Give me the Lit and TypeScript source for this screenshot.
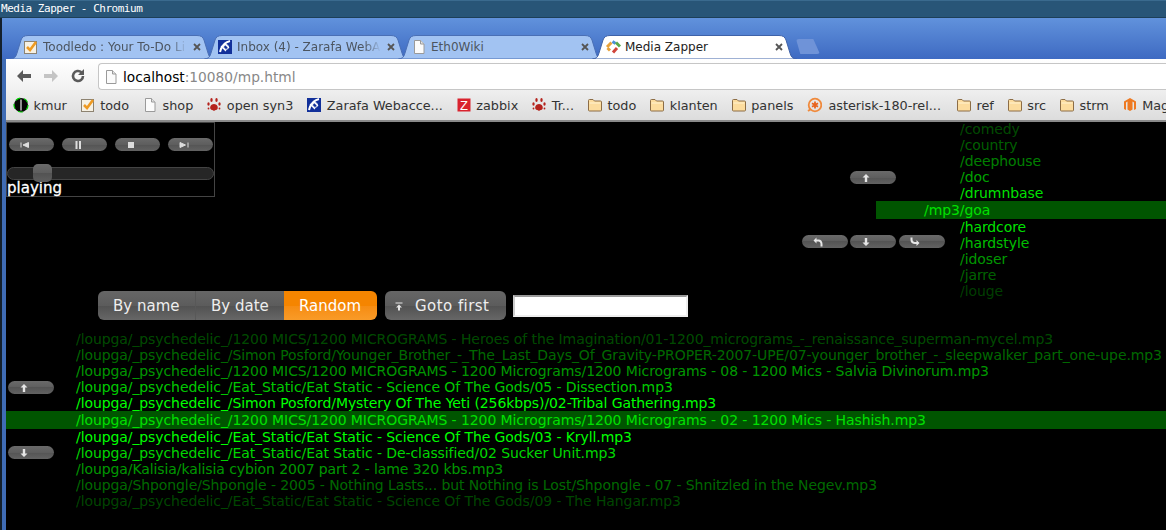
import { LitElement, html, css, svg } from "lit";
import { customElement } from "lit/decorators.js";

const page = svg`<path d="M3.500 1.500h6l3.500 3.500v9.500h-9.500z" fill="#fbfbfb" stroke="#9a9a9a"/><path d="M9.500 1.500v3.500h3.500" fill="#e4e4e4" stroke="#9a9a9a"/>`;
const check = svg`<rect x="1.500" y="2.500" width="12" height="12" fill="#f6f1e4" stroke="#8d8371"/><path d="M4 8l3 3 6-8" fill="none" stroke="#ee9a22" stroke-width="2.600"/>`;
const zarafa = svg`<rect x="1" y="1" width="14" height="14" fill="#12309a"/><path d="M3 13C4 8 8 3 13 2" fill="none" stroke="#fff" stroke-width="2"/><path d="M4 7l5 5M7 4l5 5" stroke="#fff" stroke-width="1.200"/><circle cx="9" cy="8" r="2.400" fill="none" stroke="#fff"/>`;
const paw = svg`<g fill="#b5221c"><path d="M8 7c3 0 4.500 3 3.500 5-1 1.500-2 .5-3.500 2-1.500-1.500-2.500-.5-3.500-2-1-2 .5-5 3.500-5z"/><ellipse cx="2.500" cy="7" rx="1.200" ry="1.800"/><ellipse cx="13.500" cy="7" rx="1.200" ry="1.800"/><ellipse cx="5.500" cy="3" rx="1.200" ry="2"/><ellipse cx="10.500" cy="3" rx="1.200" ry="2"/><circle cx="2.500" cy="11.500" r=".9"/><circle cx="13.500" cy="11.500" r=".9"/></g>`;
const folder = svg`<path d="M1.500 5V3.500q0-1 1-1h3.500l1.500 1.500h6q1 0 1 1v8q0 1-1 1h-11q-1 0-1-1z" fill="#fcdc9e" stroke="#8c6d46"/><path d="M2.500 6h11" stroke="#fff2d0"/>`;
const kmur = svg`<circle cx="8" cy="8" r="7" fill="#050505" stroke="#0c0" stroke-width="1.200" stroke-dasharray="5 4"/><path d="M8 2.500v11" stroke="#ccc" stroke-width="1.400"/>`;
const zabbix = svg`<rect x="1.500" y="1.500" width="13" height="13" fill="#d9232e"/><text x="8" y="13" font-size="13" text-anchor="middle" fill="#fff" font-family="Liberation Sans, sans-serif">Z</text>`;
const aster = svg`<circle cx="9" cy="8" r="6.300" fill="none" stroke="#f08a3c" stroke-width="1.800"/><path d="M2 14l3-2" stroke="#f08a3c" stroke-width="2"/><path d="M9 4.500v7M6 6.200l6 3.600M12 6.200l-6 3.600" stroke="#e8641e" stroke-width="1.800"/>`;
const magento = svg`<path d="M8 1l6 3.500v7.500l-2 1v-7.500l-1.500-1v8l-2.500 1.500-2.500-1.500v-8l-1.500 1v7.500l-2-1v-7.500z" fill="#ee7a22"/>`;
const zapper = svg`<path d="M2 8l4.500-4.500" stroke="#e8a23a" stroke-width="3"/><path d="M7.500 2.500l3 2" stroke="#4b8fd8" stroke-width="3"/><path d="M11 3.500l4 4" stroke="#5aa84a" stroke-width="3"/><path d="M12 9l-4 4.500" stroke="#d0443a" stroke-width="3"/><path d="M2.500 9l2.500 2.500" stroke="#e8a23a" stroke-width="3"/>`;

const ic = (s: unknown) => html`<svg class="ic" viewBox="0 0 16 16" width="16" height="16">${s}</svg>`;

const tabPath = (w: number) =>
  `M0.5 24C4 24 6 22 7 18L11 5C12 2 14 .5 18 .5L${w - 18} .5C${w - 14} .5 ${w - 12} 2 ${w - 11} 5L${w - 7} 18C${w - 6} 22 ${w - 4} 24 ${w - .5} 24Z`;

const tabs = [
  { t: "Toodledo : Your To-Do Li", i: check, on: false },
  { t: "Inbox (4) - Zarafa WebA", i: zarafa, on: false },
  { t: "Eth0Wiki", i: page, on: false },
  { t: "Media Zapper", i: zapper, on: true },
];

const marks: [unknown, string, string][] = [
  [kmur, "kmur", ""], [check, "todo", ""], [page, "shop", ""], [paw, "open syn3", ""], [zarafa, "Zarafa Webacce...", ""],
  [zabbix, "zabbix", ""], [paw, "Tr...", ""], [folder, "todo", ""], [folder, "klanten", ""], [folder, "panels", ""],
  [aster, "asterisk-180-rel...", "wide"], [folder, "ref", ""], [folder, "src", ""], [folder, "strm", ""], [magento, "Mag", ""],
];

const dirs: [string, number][] = [
  ["/comedy", .3], ["/country", .38], ["/deephouse", .5], ["/doc", .65], ["/drumnbase", .9],
  ["/mp3/goa", -1],
  ["/hardcore", .9], ["/hardstyle", .75], ["/idoser", .6], ["/jarre", .4], ["/louge", .25],
];

const files: [string, number][] = [
  ["/loupga/_psychedelic_/1200 MICS/1200 MICROGRAMS - Heroes of the Imagination/01-1200_micrograms_-_renaissance_superman-mycel.mp3", .3],
  ["/loupga/_psychedelic_/Simon Posford/Younger_Brother_-_The_Last_Days_Of_Gravity-PROPER-2007-UPE/07-younger_brother_-_sleepwalker_part_one-upe.mp3", .42],
  ["/loupga/_psychedelic_/1200 MICS/1200 MICROGRAMS - 1200 Micrograms/1200 Micrograms - 08 - 1200 Mics - Salvia Divinorum.mp3", .6],
  ["/loupga/_psychedelic_/Eat_Static/Eat Static - Science Of The Gods/05 - Dissection.mp3", .8],
  ["/loupga/_psychedelic_/Simon Posford/Mystery Of The Yeti (256kbps)/02-Tribal Gathering.mp3", 1],
  ["/loupga/_psychedelic_/1200 MICS/1200 MICROGRAMS - 1200 Micrograms/1200 Micrograms - 02 - 1200 Mics - Hashish.mp3", -1],
  ["/loupga/_psychedelic_/Eat_Static/Eat Static - Science Of The Gods/03 - Kryll.mp3", 1],
  ["/loupga/_psychedelic_/Eat_Static/Eat Static - De-classified/02 Sucker Unit.mp3", .85],
  ["/loupga/Kalisia/kalisia cybion 2007 part 2 - lame 320 kbs.mp3", .6],
  ["/loupga/Shpongle/Shpongle - 2005 - Nothing Lasts... but Nothing is Lost/Shpongle - 07 - Shnitzled in the Negev.mp3", .42],
  ["/loupga/_psychedelic_/Eat_Static/Eat Static - Science Of The Gods/09 - The Hangar.mp3", .28],
];

const glyph = {
  prev: svg`<path d="M1 2.500v5M8.500 2.500v5L3 5z" stroke="#ddd" fill="#ddd"/>`,
  pause: svg`<path d="M2.500 1h2v8h-2zM6 1h2v8h-2z" fill="#ddd"/>`,
  stop: svg`<rect x="2" y="2" width="6" height="6" fill="#ddd"/>`,
  next: svg`<path d="M9 2.500v5M1 2.500v5L6.500 5z" stroke="#ddd" fill="#ddd"/>`,
  up: svg`<path d="M5 1L8.500 4.500H6.200V9H3.800V4.500H1.500z" fill="#e6e6e6"/>`,
  down: svg`<path d="M5 9L8.500 5.500H6.200V1H3.800V5.500H1.500z" fill="#e6e6e6"/>`,
  back: svg`<path d="M3.500 .5V2.500H5.500C8 2.500 9.500 4.500 9.500 7V9.500H7.500V7C7.500 5.500 6.500 4.500 5.500 4.500H3.500V6.500L.5 3.500z" fill="#e6e6e6"/>`,
  fwd: svg`<path d="M.5 .5H2.500V2.500C2.500 4 3.500 5 5 5H6.500V3L9.500 6 6.500 9V7H5C2.500 7 .5 5.500 .5 3z" fill="#e6e6e6"/>`,
  first: svg`<path d="M1.500 1.500h7v1h-7zM5 3.500L8 6.500H6V9.500H4V6.500H2z" fill="#e6e6e6"/>`,
};

const pill = (g: unknown) => html`<button class="pill"><svg viewBox="0 0 10 10" width="10" height="10">${g}</svg></button>`;

const rowStyle = (o: number) => `color: rgba(0,255,0,${o})`;

@customElement("app-root")
export class AppRoot extends LitElement {
  static styles = css`
    :host { display: block; width: 1166px; height: 530px; overflow: hidden; background: #000; font-family: "DejaVu Sans", sans-serif; }
    .shell { display: flex; flex-direction: column; height: 530px; }
    .title { height: 18px; flex: none; box-sizing: border-box; background: #285577; border-top: 1px solid #3a6a8e; border-bottom: 1px solid #1d3f58; color: #fff; font: 11px/15px "DejaVu Sans Mono", monospace; letter-spacing: -.48px; padding-left: 1px; white-space: pre; }
    .frame { flex: 1; min-height: 0; display: flex; flex-direction: column; background: #3f6cb5; border-left: 2px solid #14202c; padding-left: 4px; }
    .strip { flex: none; height: 41px; box-sizing: border-box; padding: 17px 0 0 8px; display: flex; align-items: flex-start; background: linear-gradient(#6192dc, #3e6ac2); margin-left: -4px; }
    .tab { position: relative; flex: none; width: 205px; height: 24px; margin-right: -11px; display: flex; align-items: center; padding: 0 0 0 13px; box-sizing: border-box; font-size: 12px; color: #4c5560; }
    .tab.on { color: #222; z-index: 2; }
    .tab > .bg { position: absolute; inset: 0; }
    .tab .ic { position: relative; flex: none; }
    .label { position: relative; margin-left: 4px; width: 144px; white-space: nowrap; }
    .fade { -webkit-mask-image: linear-gradient(90deg, #000 88%, transparent); mask-image: linear-gradient(90deg, #000 88%, transparent); }
    .close { position: relative; margin-left: 5px; }
    .newtab { flex: none; margin: 4px 0 0 10px; width: 24px; height: 15px; background: #6f93d8; clip-path: polygon(0 0, 72% 0, 100% 100%, 18% 100%); border-radius: 3px; }
    .tools { flex: none; height: 31px; display: flex; align-items: flex-start; background: linear-gradient(#fff, #f1f1f1); box-sizing: border-box; padding-top: 4px; }
    .navs { width: 92px; flex: none; display: flex; align-items: center; height: 26px; padding-left: 9px; gap: 9px; box-sizing: border-box; }
    .addr { flex: 1; height: 27px; box-sizing: border-box; background: #fff; border: 1px solid #c6c6c6; border-right: 0; border-radius: 4px 0 0 4px; display: flex; align-items: center; padding-left: 4px; font-size: 13.75px; color: #000; }
    .addr span { color: #888; }
    .addr .ic { margin-right: 4px; }
    .marks { flex: none; height: 32px; box-sizing: border-box; border-bottom: 2px solid #8a8a8a; background: linear-gradient(#efefef, #dcdcdc); display: flex; align-items: center; gap: 13px; padding-left: 7px; font-size: 12.8px; color: #333; white-space: nowrap; overflow: hidden; }
    .mark { display: flex; align-items: center; gap: 4.5px; flex: none; }
    .mark.wide { gap: 6px; margin-right: 2px; }
    .page { flex: 1; min-height: 0; background: #000; color: #fff; font-size: 14px; overflow: hidden; }
    .top { height: 169px; display: grid; grid-template-columns: 209px 587px 74px 69px 221px; }
    .player { grid-column: 1; grid-row: 1; box-sizing: border-box; width: 209px; height: 75px; border: 1px solid #444; padding: 15px 0 0 0; display: flex; flex-direction: column; }
    .ctl { display: flex; gap: 8px; padding-left: 2px; }
    .pill { flex: none; width: 46px; height: 13px; padding: 0 0 0 11px; margin: 0; border: 0; border-radius: 7px; background: linear-gradient(#6a6a6a, #5e5e5e 50%, #545454 50%, #626262); display: flex; align-items: center; }
    .ctl .pill { width: 45px; }
    .slider { position: relative; margin-top: 16px; height: 13px; box-sizing: border-box; border: 1px solid #444; border-radius: 7px; background: #262626; }
    .knob { position: absolute; left: 25px; top: -4px; width: 19px; height: 18px; border-radius: 5px; background: linear-gradient(#6a6a6a, #5e5e5e 50%, #525252 50%, #5e5e5e); }
    .status { font-size: 15px; line-height: 15px; margin-top: 1px; color: #fff; -webkit-text-stroke: .3px #fff; }
    .nav { grid-column: 3 / 5; grid-row: 1; padding-top: 49px; display: flex; flex-direction: column; gap: 51px; z-index: 1; }
    .nav > div { display: flex; gap: 2px; }
    .nav > .one { padding-left: 48px; }
    .tri .pill:last-child { margin-left: 1px; }
    .dirs { grid-column: 4 / 6; grid-row: 1; margin-top: -1px; font-size: 14px; letter-spacing: -.09px; }
    .dir { height: 16px; line-height: 16px; padding-left: 84px; white-space: nowrap; }
    .sel { height: 18px; line-height: 18px; background: #005500; color: #00e000; }
    .dirs .sel { padding-left: 48px; }
    .sortbar { position: relative; z-index: 2; height: 29px; padding-left: 92px; display: flex; align-items: center; font-size: 15px; }
    .seg { display: flex; border-radius: 6px; overflow: hidden; }
    .sbtn { height: 29px; box-sizing: border-box; padding: 0 15px; display: flex; align-items: center; color: #eee; background: linear-gradient(#666, #5c5c5c 50%, #525252 52%, #676767); white-space: nowrap; }
    .sbtn.or { background: linear-gradient(#f58500, #f58500 50%, #f68c12 52%, #f99b28); color: #fff; }
    .sbtn.w1 { width: 97px; } .sbtn.w2 { width: 89px; border-left: 1px solid #585858; } .sbtn.w3 { width: 93px; }
    .goto { margin-left: 8px; width: 121px; border-radius: 6px; padding: 0 0 0 9px; gap: 11px; letter-spacing: .45px; }
    .search { margin-left: 7px; width: 175px; height: 22px; box-sizing: border-box; padding: 0; border: 2px solid #eee; border-top-color: #999; border-left-color: #ccc; background: #fff; }
    .listwrap { margin-top: 11px; display: grid; }
    .files, .fnav { grid-column: 1; grid-row: 1; }
    .fnav { padding: 50px 0 0 2px; display: flex; flex-direction: column; gap: 52px; z-index: 1; align-items: flex-start; }
    .file { height: 16px; line-height: 16px; padding-left: 70px; white-space: nowrap; overflow: hidden; font-size: 14px; letter-spacing: -.09px; }
    .file.sel { height: 18px; line-height: 18px; }
  `;

  render() {
    return html`<div class="shell">
      <div class="title">Media Zapper - Chromium</div>
      <div class="frame">
        <div class="strip">
          ${tabs.map((t) => html`<div class="tab ${t.on ? "on" : ""}">
            <svg class="bg" width="205" height="24" viewBox="0 0 205 24">
              <path d=${tabPath(205)} fill=${t.on ? "#fff" : "#a2c3f2"} stroke=${t.on ? "#3f62a8" : "#4a6fb5"} />
            </svg>
            ${ic(t.i)}
            <span class="label ${t.t.length > 20 ? "fade" : ""}">${t.t}</span>
            <svg class="close" width="10" height="10" viewBox="0 0 10 10"><path d="M2 2l6 6M8 2l-6 6" stroke="#555" stroke-width="1.800"/></svg>
          </div>`)}
          <div class="newtab"></div>
        </div>
        <div class="tools">
          <div class="navs">
            <svg width="18" height="18" viewBox="0 0 18 18"><path d="M2 9l6-6v4h8v4H8v4z" fill="#5a5a5a"/></svg>
            <svg width="18" height="18" viewBox="0 0 18 18"><path d="M16 9l-6-6v4H2v4h8v4z" fill="#c4c4c4"/></svg>
            <svg width="18" height="18" viewBox="0 0 18 18"><path d="M14 9a5 5 0 1 1-1.600-3.700" fill="none" stroke="#5a5a5a" stroke-width="2.600"/><path d="M15 2v6h-6z" fill="#5a5a5a"/></svg>
          </div>
          <div class="addr">${ic(page)}localhost<span>:10080/mp.html</span></div>
        </div>
        <div class="marks">
          ${marks.map(([i, l, c]) => html`<div class="mark ${c}">${ic(i)}<span>${l}</span></div>`)}
        </div>
        <div class="page">
          <div class="top">
            <div class="player">
              <div class="ctl">${pill(glyph.prev)}${pill(glyph.pause)}${pill(glyph.stop)}${pill(glyph.next)}</div>
              <div class="slider"><div class="knob"></div></div>
              <div class="status">playing</div>
            </div>
            <div class="nav">
              <div class="one">${pill(glyph.up)}</div>
              <div class="tri">${pill(glyph.back)}${pill(glyph.down)}${pill(glyph.fwd)}</div>
            </div>
            <div class="dirs">
              ${dirs.map(([d, o]) => o < 0
                ? html`<div class="dir sel">${d}</div>`
                : html`<div class="dir" style=${rowStyle(o)}>${d}</div>`)}
            </div>
          </div>
          <div class="sortbar">
            <div class="seg">
              <div class="sbtn w1">By name</div>
              <div class="sbtn w2">By date</div>
              <div class="sbtn w3 or">Random</div>
            </div>
            <div class="sbtn goto"><svg width="10" height="10" viewBox="0 0 10 10">${glyph.first}</svg>Goto first</div>
            <input class="search" type="text" />
          </div>
          <div class="listwrap">
            <div class="files">
              ${files.map(([f, o]) => o < 0
                ? html`<div class="file sel">${f}</div>`
                : html`<div class="file" style=${rowStyle(o)}>${f}</div>`)}
            </div>
            <div class="fnav">${pill(glyph.up)}${pill(glyph.down)}</div>
          </div>
        </div>
      </div>
    </div>`;
  }
}
